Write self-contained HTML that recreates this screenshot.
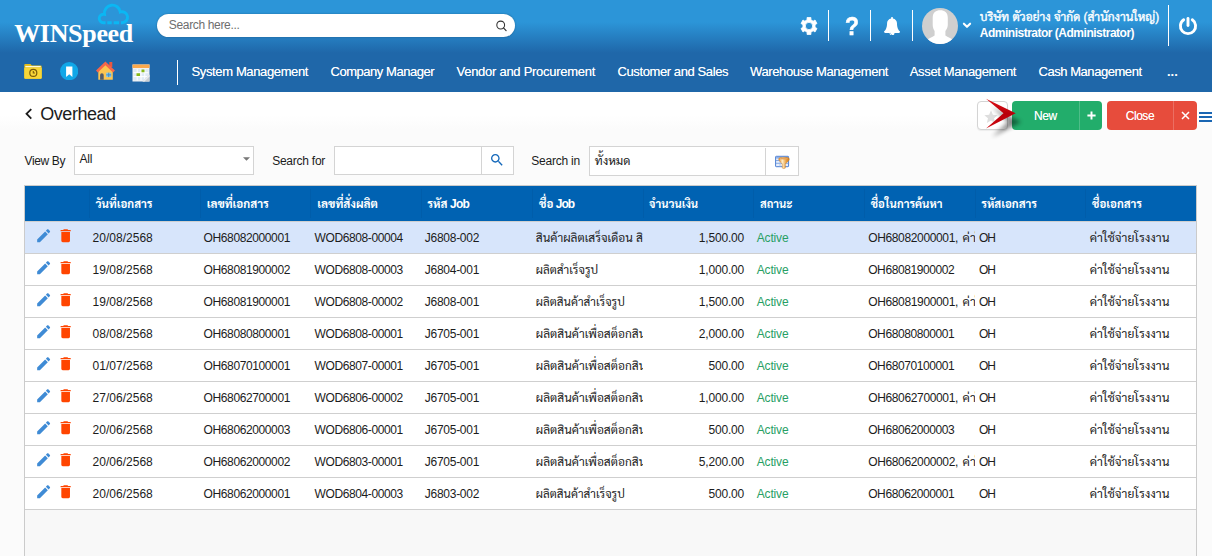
<!DOCTYPE html>
<html lang="th">
<head>
<meta charset="utf-8">
<title>Overhead</title>
<style>
*{box-sizing:border-box;margin:0;padding:0}
html,body{width:1212px;height:556px;overflow:hidden;background:#fbfbfb}
body{font-family:"Liberation Sans","Sarabun","Noto Sans Thai Looped","Loma",sans-serif;font-size:12px;color:#1c1c1c;position:relative}
.abs{position:absolute}
.t{position:absolute;white-space:nowrap;line-height:20px;height:20px}
.t .i{display:inline-block;white-space:nowrap}
#hdr{position:absolute;left:0;top:0;width:1212px;height:92px;background:linear-gradient(to bottom,#2c95d8 0px,#2c95d8 22px,#1f67a9 53px,#1f67a9 92px)}
#logo{position:absolute;left:14.2px;top:18.75px;letter-spacing:-.32px;font-family:"Liberation Serif",serif;font-weight:bold;font-size:26px;color:#fff;line-height:30px;white-space:nowrap}
#srch{position:absolute;left:157px;top:14px;width:358px;height:23px;border-radius:12px;background:#fff;box-shadow:0 0 2px rgba(0,0,0,.3)}
.vd{position:absolute;width:1px;background:#fff}
#main{position:absolute;left:0;top:92px;width:1212px;height:464px;background:linear-gradient(to bottom,#fff 0px,#fff 23px,#fbfbfb 37px)}
.btn{position:absolute;top:101px;height:29px;border-radius:4px}
.btn i{position:absolute;top:0;width:1px;height:29px;background:rgba(255,255,255,.2)}
.inp{position:absolute;top:146px;height:29px;background:#fff;border:1px solid #d4d4d4}
.inp i{position:absolute;top:0;width:1px;height:27px;background:#d4d4d4}
#tbl{position:absolute;left:24px;top:185px;width:1173px;height:380px;border:1px solid #cbcbcb;background:#f8f8f8}
#th{position:absolute;left:25px;top:186px;width:1171px;height:35px;background:#0062b2}
#th i{position:absolute;top:3px;width:1px;height:29px;background:rgba(0,0,40,.05)}
.row{position:absolute;left:25px;width:1171px;height:32px;background:#fff;border-top:1px solid #cfcfcf}
.row.sel{background:#d7e5fb}
.k{letter-spacing:0}

</style>
</head>
<body>
<div id="hdr">
<svg class="abs" style="left:95px;top:1px" width="37" height="26" viewBox="0 0 37 26"><path d="M10.60 21.70 L8.50 21.70 A4.25 4.25 0 1 1 9.49 13.32 A8.00 8.00 0 1 1 25.32 10.99 A5.50 5.50 0 1 1 27.10 21.70 L26.00 21.70 M12.30 21.70 L16.70 21.70 M18.70 21.70 L24.00 21.70" fill="none" stroke="#0bb7f3" stroke-width="2.9"/></svg>
<div id="logo">WINSpeed</div>
<div id="srch"><svg class="abs" style="left:338px;top:5.5px" width="13" height="13" viewBox="0 0 13 13"><circle cx="5.700" cy="5" r="3.900" fill="none" stroke="#333" stroke-width="1.050"/><path d="M8.500 7.900l2.600 2.700" stroke="#333" stroke-width="1.200" stroke-linecap="round"/></svg></div>
<span class="t" style="top:15.04px;font-size:12px;color:#6e6e6e;letter-spacing:-0.341px;left:168.80px;"><span class="i">Search here...</span></span>
<svg class="abs" style="left:798.95px;top:15.9px" width="20" height="20" viewBox="0 0 20 20"><path d="M11.92 3.82 L11.94 1.54 L8.06 1.54 L8.08 3.82 L5.85 5.17 L3.97 4.01 L2.03 7.53 L3.93 8.65 L3.93 11.35 L2.03 12.47 L3.97 15.99 L5.85 14.83 L8.08 16.18 L8.06 18.46 L11.94 18.46 L11.92 16.18 L14.15 14.83 L16.03 15.99 L17.97 12.47 L16.07 11.35 L16.07 8.65 L17.97 7.53 L16.03 4.01 L14.15 5.17Z M6.30 10.00 a3.7 3.7 0 1 0 7.4 0 a3.7 3.7 0 1 0 -7.4 0Z" fill="#fff" fill-rule="evenodd" stroke="#fff" stroke-width=".8" stroke-linejoin="round"/></svg>
<div class="vd" style="left:828px;top:10px;height:31px"></div>
<span class="t" style="top:16.26px;font-size:25.5px;color:#fff;font-weight:bold;left:845.20px;transform:scaleX(.9);transform-origin:0 0;-webkit-text-stroke:.5px #fff;"><span class="i"><span class="k" style="font-size:25.50px">?</span></span></span>
<div class="vd" style="left:870px;top:10px;height:31px"></div>
<svg class="abs" style="left:884.00px;top:16.50px" width="16.06" height="18.60" preserveAspectRatio="none" viewBox="64 -1536 1664 1792"><path transform="scale(1,-1)" fill="#fff" d="M912 -160C912 -169 905 -176 896 -176C799 -176 720 -97 720 0C720 9 727 16 736 16C745 16 752 9 752 0C752 -79 817 -144 896 -144C905 -144 912 -151 912 -160ZM1728 128C1580 253 1408 477 1408 960C1408 1152 1249 1362 984 1401C989 1413 992 1426 992 1440C992 1493 949 1536 896 1536C843 1536 800 1493 800 1440C800 1426 803 1413 808 1401C543 1362 384 1152 384 960C384 477 212 253 64 128C64 58 122 0 192 0H640C640 -141 755 -256 896 -256C1037 -256 1152 -141 1152 0H1600C1670 0 1728 58 1728 128Z"/></svg>
<div class="vd" style="left:912px;top:10px;height:31px"></div>
<svg class="abs" style="left:921px;top:7px" width="38" height="38" viewBox="-19 -19 38 38"><defs><clipPath id="av"><circle cx="0" cy="0" r="18"/></clipPath></defs><circle cx="0" cy="0" r="18" fill="#cfcfcf"/><g clip-path="url(#av)"><path fill="#fff" d="M-7.300 -8C-7.300 -14 -4 -15.800 0.200 -15.800C4.500 -15.800 7.800 -14 7.800 -8V-1C7.800 2 6 4 5.400 5V9.500C8 11.500 11 12.300 13 14L15 20H-15L-13 14C-11 12.300 -8 11.500 -5.400 9.500V5C-6 4 -7.300 2 -7.300 -1Z"/></g></svg>
<svg class="abs" style="left:962px;top:21px" width="10" height="8" viewBox="0 0 10 8"><path d="M1.900 2.700L5 5.800L8.100 2.700" fill="none" stroke="#fff" stroke-width="2.100" stroke-linecap="round" stroke-linejoin="round"/></svg>
<span class="t" style="top:7.14px;font-size:12px;color:#fff;left:979.80px;-webkit-text-stroke:.35px #fff;"><span class="i"><span class="k" style="font-size:11.90px">บริษัท ตัวอย่าง จำกัด (สำนักงานใหญ่)</span></span></span>
<span class="t" style="top:23.24px;font-size:12px;color:#fff;font-weight:bold;letter-spacing:-0.496px;left:979.80px;"><span class="i">Administrator (Administrator)</span></span>
<div class="vd" style="left:1168px;top:5px;height:41px"></div>
<svg class="abs" style="left:1178.1px;top:15.8px" width="20" height="20" viewBox="0 0 20 20"><path d="M5.700 3.800A7.600 7.600 0 1 0 14.300 3.800" fill="none" stroke="#fff" stroke-width="2.900" stroke-linecap="round"/><path d="M10 2.500v7" stroke="#fff" stroke-width="2.900" stroke-linecap="round"/></svg>
<svg class="abs" style="left:24px;top:63px" width="18" height="17" viewBox="0 0 18 17"><path d="M0.300 2a1 1 0 0 1 1-1.100h5.200l1.300 1.500h8.900a1 1 0 0 1 1 1v11.400a1 1 0 0 1-1 1h-15.400a1 1 0 0 1-1-1z" fill="#e2bd1c"/><path d="M0.300 4.700h17.400v10a1 1 0 0 1-1 1h-15.400a1 1 0 0 1-1-1z" fill="#f8d737"/><path d="M1.300 3.600h15.400" stroke="#fff8d8" stroke-width="1.300"/><circle cx="9.300" cy="9.900" r="3.500" fill="none" stroke="#7a5c0a" stroke-width="1.200"/><path d="M9.300 8v2h1.600" fill="none" stroke="#7a5c0a" stroke-width="1.100"/></svg>
<svg class="abs" style="left:59.8px;top:62px" width="18.4" height="18.4" viewBox="0 0 18.4 18.4"><circle cx="9.200" cy="9.200" r="9.100" fill="#10a7e8"/><path d="M6.100 4.500h6.300v10.500l-3.150-2.700-3.150 2.700z" fill="#fff"/></svg>
<svg class="abs" style="left:95.5px;top:61.2px" width="19" height="19" viewBox="0 0 19 19"><path d="M13.300 1h3v5h-3z" fill="#e9573f"/><path d="M2.300 8.500l7.100-6 7.400 6v10.200h-14.500z" fill="#fcc550"/><path d="M9.400 0.400L18.900 9.500l-1.900 2-7.600-7.300-7.600 7.300-1.900-2z" fill="#f4664a"/><path d="M4.100 14a1.800 1.800 0 0 1 3.600 0v4.700h-3.600z" fill="#525b6b"/><path d="M10.200 11.700h5v4.400h-5z" fill="#7cc7f2"/><path d="M12.700 11.700v4.400M10.200 13.900h5" stroke="#3f82b5" stroke-width=".8"/></svg>
<svg class="abs" style="left:132px;top:63.5px" width="18" height="18" viewBox="0 0 18 18"><path d="M0.500 0.500h17v17h-17z" fill="#f2f2f2"/><path d="M0.500 0.500h17v3.500h-17z" fill="#fba94c"/><path d="M1.500 5h15v11.500h-15z" fill="#dfeaf5"/><path d="M1.500 8.700h15M1.500 12.600h15M5.200 5v11.500M9 5v11.500M12.800 5v11.500" stroke="#fff" stroke-width="1"/><path d="M9.500 5.500h3v2.700h-3zM4.500 9.300h3.500v2.800h-3.500z" fill="#86b817"/><path d="M10.500 17.500l7-7v7z" fill="#c9cdd2"/><path d="M10.500 17.500l3.500-3.500 3.500-3.500v2l-5 5z" fill="#e9ecef"/></svg>
<div class="vd" style="left:177px;top:60px;height:25px"></div>
<span class="t" style="top:61.70px;font-size:13px;color:#fff;letter-spacing:-0.367px;left:191.50px;text-shadow:0 0 .5px rgba(255,255,255,.7);"><span class="i">System Management</span></span>
<span class="t" style="top:61.70px;font-size:13px;color:#fff;letter-spacing:-0.464px;left:330.50px;text-shadow:0 0 .5px rgba(255,255,255,.7);"><span class="i">Company Manager</span></span>
<span class="t" style="top:61.70px;font-size:13px;color:#fff;letter-spacing:-0.270px;left:456.50px;text-shadow:0 0 .5px rgba(255,255,255,.7);"><span class="i">Vendor and Procurement</span></span>
<span class="t" style="top:61.70px;font-size:13px;color:#fff;letter-spacing:-0.400px;left:617.50px;text-shadow:0 0 .5px rgba(255,255,255,.7);"><span class="i">Customer and Sales</span></span>
<span class="t" style="top:61.70px;font-size:13px;color:#fff;letter-spacing:-0.369px;left:750.00px;text-shadow:0 0 .5px rgba(255,255,255,.7);"><span class="i">Warehouse Management</span></span>
<span class="t" style="top:61.70px;font-size:13px;color:#fff;letter-spacing:-0.357px;left:909.80px;text-shadow:0 0 .5px rgba(255,255,255,.7);"><span class="i">Asset Management</span></span>
<span class="t" style="top:61.70px;font-size:13px;color:#fff;letter-spacing:-0.450px;left:1038.50px;text-shadow:0 0 .5px rgba(255,255,255,.7);"><span class="i">Cash Management</span></span>
<span class="t" style="top:61.70px;font-size:13px;color:#fff;font-weight:bold;left:1167.00px;letter-spacing:-.2px;"><span class="i"><span class="k" style="font-size:13.00px">...</span></span></span>
</div>
<div id="main"></div>
<svg class="abs" style="left:18.45px;top:103.05px;" width="21.7" height="21.7" viewBox="0 0 24 24"><path fill="#1c1c1c" d="M15.41 16.59L10.83 12l4.58-4.59L14 6l-6 6 6 6 1.41-1.41z"/></svg>
<span class="t" style="top:103.76px;font-size:18px;color:#1c1c1c;letter-spacing:-0.470px;left:40.30px;"><span class="i">Overhead</span></span>
<div class="abs" style="left:977px;top:101px;width:31px;height:29px;border:1px solid #d4d4d4;border-radius:4px;background:#fff;box-shadow:0 1px 1px rgba(0,0,0,.06)"></div>
<svg class="abs" style="left:983.10px;top:108.70px;" width="16" height="16" viewBox="0 0 24 24"><path fill="#dedede" d="M12 17.27L18.18 21l-1.64-7.03L22 9.24l-7.19-.61L12 2 9.19 8.63 2 9.24l5.46 4.73L5.82 21z"/></svg>
<div class="btn" style="left:1012px;width:90px;background:#22ad6b"><i style="left:67px"></i></div>
<span class="t" style="top:105.84px;font-size:12px;color:#fff;letter-spacing:-0.473px;left:1034.10px;text-shadow:0 0 .5px rgba(255,255,255,.7);"><span class="i">New</span></span>
<svg class="abs" style="left:1086.8px;top:111.4px" width="9" height="9" viewBox="0 0 9 9"><path d="M4.500 0.400v8.200M0.400 4.500h8.200" stroke="#fff" stroke-width="1.950"/></svg>
<div class="btn" style="left:1107px;width:90px;background:#e74c3c"><i style="left:66px"></i></div>
<span class="t" style="top:105.84px;font-size:12px;color:#fff;letter-spacing:-0.476px;left:1125.80px;text-shadow:0 0 .5px rgba(255,255,255,.7);"><span class="i">Close</span></span>
<svg class="abs" style="left:1180.7px;top:111.4px" width="9" height="9" viewBox="0 0 9 9"><path d="M1 1l7 7M8 1l-7 7" stroke="#fff" stroke-width="1.500"/></svg>
<svg class="abs" style="left:976px;top:94px;overflow:visible" width="50" height="46" viewBox="0 0 50 46"><defs><filter id="sh" x="-40%" y="-40%" width="200%" height="200%"><feGaussianBlur stdDeviation="2.200"/></filter><linearGradient id="rg" x1="0" y1="0" x2="0" y2="1"><stop offset="0" stop-color="#e01018"/><stop offset=".5" stop-color="#b8000a"/><stop offset="1" stop-color="#d00810"/></linearGradient></defs><path d="M14 10l29 15-29 15 16-15z" fill="#000" opacity=".45" filter="url(#sh)" transform="translate(2,3)"/><path d="M10 4.700l29.700 14.500-29.700 15.300 17.500-15.300z" fill="url(#rg)"/></svg>
<div class="abs" style="left:1199px;top:111.500px;width:13px;height:2px;background:#1a66b3"></div>
<div class="abs" style="left:1199px;top:115.500px;width:13px;height:2px;background:#1a66b3"></div>
<div class="abs" style="left:1199px;top:119.500px;width:13px;height:2px;background:#1a66b3"></div>
<span class="t" style="top:150.84px;font-size:12px;color:#1c1c1c;letter-spacing:-0.363px;left:24.50px;"><span class="i">View By</span></span>
<div class="inp" style="left:74px;width:180px"></div>
<span class="t" style="top:148.84px;font-size:12px;color:#1c1c1c;letter-spacing:-0.249px;left:79.50px;"><span class="i">All</span></span>
<svg class="abs" style="left:242.5px;top:157px" width="7" height="3.8" viewBox="0 0 8 4"><path d="M0 0h8L4 4z" fill="#777"/></svg>
<span class="t" style="top:150.84px;font-size:12px;color:#1c1c1c;letter-spacing:-0.246px;left:272.20px;"><span class="i">Search for</span></span>
<div class="inp" style="left:334px;width:180px"><i style="left:146px"></i></div>
<svg class="abs" style="left:489.20px;top:151.70px;" width="16" height="16" viewBox="0 0 24 24"><path fill="#1468ba" d="M15.5 14h-.79l-.28-.27C15.41 12.59 16 11.11 16 9.5 16 5.91 13.09 3 9.5 3S3 5.91 3 9.5 5.91 16 9.5 16c1.61 0 3.09-.59 4.23-1.57l.27.28v.79l5 4.99L20.49 19l-4.99-5zm-6 0C7.01 14 5 11.99 5 9.5S7.01 5 9.5 5 14 7.01 14 9.5 11.99 14 9.5 14z"/></svg>
<span class="t" style="top:150.84px;font-size:12px;color:#1c1c1c;letter-spacing:-0.234px;left:531.30px;"><span class="i">Search in</span></span>
<div class="inp" style="left:589px;width:210px;height:30px"><i style="left:175px;top:1px;height:27px"></i></div>
<span class="t" style="top:150.84px;font-size:12px;color:#1c1c1c;left:594.70px;"><span class="i"><span class="k" style="font-size:12.13px">ทั้งหมด</span></span></span>
<svg class="abs" style="left:774px;top:155px" width="17" height="15" viewBox="774 155 17 15"><defs><linearGradient id="fg" x1="0" y1="0" x2="1" y2="0"><stop offset="0" stop-color="#e39232"/><stop offset=".35" stop-color="#fdebc6"/><stop offset=".7" stop-color="#eaa040"/><stop offset="1" stop-color="#cf7c20"/></linearGradient></defs><rect x="775.600" y="156.300" width="13" height="10.400" rx=".6" fill="#e6eefb" stroke="#4d7fd2" stroke-width="1"/><path d="M776 157.800h12.200" stroke="#8fb0e8" stroke-width="1.600"/><path d="M776 160.500h12.200M776 163.300h12.200" stroke="#7ea2e0" stroke-width=".9"/><path d="M780 157v9.500" stroke="#9db9ea" stroke-width=".8"/><path d="M778.700 158.700Q779 157.300 784 157.300Q789 157.300 789.300 158.700C789.200 161.500 786.200 162.400 785.300 164V168.100Q783.800 169 782.300 168.100V164C781.400 162.400 778.800 161.500 778.700 158.700Z" fill="url(#fg)" stroke="#c9781f" stroke-width=".5"/><ellipse cx="784" cy="158.600" rx="3.800" ry=".9" fill="#e6a25a"/></svg>
<div class="abs" style="left:1197px;top:180px;width:15px;height:376px;background:#fbfbfb"></div>
<div id="tbl"></div>
<div id="th"><i style="left:64.0px"></i><i style="left:174.7px"></i><i style="left:285.4px"></i><i style="left:396.1px"></i><i style="left:506.8px"></i><i style="left:617.5px"></i><i style="left:728.2px"></i><i style="left:838.9px"></i><i style="left:949.6px"></i><i style="left:1060.3px"></i></div>
<span class="t" style="top:193.84px;font-size:12px;color:#fff;font-weight:bold;left:95.50px;"><span class="i"><span class="k" style="font-size:11.42px">วันที่เอกสาร</span></span></span>
<span class="t" style="top:193.84px;font-size:12px;color:#fff;font-weight:bold;left:206.70px;"><span class="i"><span class="k" style="font-size:11.58px">เลขที่เอกสาร</span></span></span>
<span class="t" style="top:193.84px;font-size:12px;color:#fff;font-weight:bold;left:317.30px;"><span class="i"><span class="k" style="font-size:11.66px">เลขที่สั่งผลิต</span></span></span>
<span class="t" style="top:193.84px;font-size:12px;color:#fff;font-weight:bold;letter-spacing:-0.740px;left:427.30px;"><span class="i"><span class="k" style="font-size:11.52px">รหัส</span> Job</span></span>
<span class="t" style="top:193.84px;font-size:12px;color:#fff;font-weight:bold;letter-spacing:-0.995px;left:539.00px;"><span class="i"><span class="k" style="font-size:11.52px">ชื่อ</span> Job</span></span>
<span class="t" style="top:193.84px;font-size:12px;color:#fff;font-weight:bold;left:649.00px;"><span class="i"><span class="k" style="font-size:11.24px">จำนวนเงิน</span></span></span>
<span class="t" style="top:193.84px;font-size:12px;color:#fff;font-weight:bold;left:760.00px;"><span class="i"><span class="k" style="font-size:11.15px">สถานะ</span></span></span>
<span class="t" style="top:193.84px;font-size:12px;color:#fff;font-weight:bold;left:870.70px;"><span class="i"><span class="k" style="font-size:11.29px">ชื่อในการค้นหา</span></span></span>
<span class="t" style="top:193.84px;font-size:12px;color:#fff;font-weight:bold;left:981.30px;"><span class="i"><span class="k" style="font-size:11.45px">รหัสเอกสาร</span></span></span>
<span class="t" style="top:193.84px;font-size:12px;color:#fff;font-weight:bold;left:1092.00px;"><span class="i"><span class="k" style="font-size:11.43px">ชื่อเอกสาร</span></span></span>
<div class="row sel" style="top:221px"></div>
<svg class="abs" style="left:35.05px;top:226.60px;" width="17.3" height="17.3" viewBox="0 0 24 24"><path fill="#3f8bd5" d="M3 17.25V21h3.75L17.81 9.94l-3.75-3.75L3 17.25zM20.71 7.04c.39-.39.39-1.02 0-1.41l-2.34-2.34c-.39-.39-1.02-.39-1.41 0l-1.83 1.83 3.75 3.75 1.83-1.83z"/></svg>
<svg class="abs" style="left:56.55px;top:226.75px;" width="17.3" height="17.3" viewBox="0 0 24 24"><path fill="#ff4500" d="M6 19c0 1.1.9 2 2 2h8c1.1 0 2-.9 2-2V7H6v12zM19 4h-3.5l-1-1h-5l-1 1H5v2h14V4z"/></svg>
<span class="t" style="top:227.84px;font-size:12px;color:#1c1c1c;letter-spacing:0.013px;left:92.60px;"><span class="i">20/08/2568</span></span>
<span class="t" style="top:227.84px;font-size:12px;color:#1c1c1c;letter-spacing:-0.386px;left:203.60px;"><span class="i">OH68082000001</span></span>
<span class="t" style="top:227.84px;font-size:12px;color:#1c1c1c;letter-spacing:-0.392px;left:314.50px;"><span class="i">WOD6808-00004</span></span>
<span class="t" style="top:227.84px;font-size:12px;color:#1c1c1c;letter-spacing:-0.270px;left:424.80px;"><span class="i">J6808-002</span></span>
<span class="t" style="top:227.84px;font-size:12px;color:#1c1c1c;left:535.80px;width:106.80px;overflow:hidden;"><span class="i"><span class="k" style="font-size:11.88px">สินค้าผลิตเสร็จเดือน สิงหาคม</span></span></span>
<span class="t" style="top:227.84px;font-size:12px;color:#1c1c1c;letter-spacing:-0.177px;left:698.80px;"><span class="i">1,500.00</span></span>
<span class="t" style="top:227.84px;font-size:12px;color:#27a064;letter-spacing:-0.182px;left:756.80px;"><span class="i">Active</span></span>
<span class="t" style="top:227.84px;font-size:12px;color:#1c1c1c;left:868.20px;width:106.80px;overflow:hidden;letter-spacing:-0.356px;"><span class="i">OH68082000001<span style="letter-spacing:.45px">, </span><span class="k" style="font-size:12.2px">ค่าใช้จ่ายโรงงาน</span></span></span>
<span class="t" style="top:227.84px;font-size:12px;color:#1c1c1c;letter-spacing:-1.153px;left:979.10px;"><span class="i">OH</span></span>
<span class="t" style="top:227.84px;font-size:12px;color:#1c1c1c;left:1089.70px;"><span class="i"><span class="k" style="font-size:12.13px">ค่าใช้จ่ายโรงงาน</span></span></span>
<div class="row" style="top:253px"></div>
<svg class="abs" style="left:35.05px;top:258.60px;" width="17.3" height="17.3" viewBox="0 0 24 24"><path fill="#3f8bd5" d="M3 17.25V21h3.75L17.81 9.94l-3.75-3.75L3 17.25zM20.71 7.04c.39-.39.39-1.02 0-1.41l-2.34-2.34c-.39-.39-1.02-.39-1.41 0l-1.83 1.83 3.75 3.75 1.83-1.83z"/></svg>
<svg class="abs" style="left:56.55px;top:258.75px;" width="17.3" height="17.3" viewBox="0 0 24 24"><path fill="#ff4500" d="M6 19c0 1.1.9 2 2 2h8c1.1 0 2-.9 2-2V7H6v12zM19 4h-3.5l-1-1h-5l-1 1H5v2h14V4z"/></svg>
<span class="t" style="top:259.84px;font-size:12px;color:#1c1c1c;letter-spacing:0.013px;left:92.60px;"><span class="i">19/08/2568</span></span>
<span class="t" style="top:259.84px;font-size:12px;color:#1c1c1c;letter-spacing:-0.386px;left:203.60px;"><span class="i">OH68081900002</span></span>
<span class="t" style="top:259.84px;font-size:12px;color:#1c1c1c;letter-spacing:-0.392px;left:314.50px;"><span class="i">WOD6808-00003</span></span>
<span class="t" style="top:259.84px;font-size:12px;color:#1c1c1c;letter-spacing:-0.270px;left:424.80px;"><span class="i">J6804-001</span></span>
<span class="t" style="top:259.84px;font-size:12px;color:#1c1c1c;left:535.80px;"><span class="i"><span class="k" style="font-size:11.63px">ผลิตสำเร็จรูป</span></span></span>
<span class="t" style="top:259.84px;font-size:12px;color:#1c1c1c;letter-spacing:-0.177px;left:698.80px;"><span class="i">1,000.00</span></span>
<span class="t" style="top:259.84px;font-size:12px;color:#27a064;letter-spacing:-0.182px;left:756.80px;"><span class="i">Active</span></span>
<span class="t" style="top:259.84px;font-size:12px;color:#1c1c1c;letter-spacing:-0.401px;left:868.20px;"><span class="i">OH68081900002</span></span>
<span class="t" style="top:259.84px;font-size:12px;color:#1c1c1c;letter-spacing:-1.153px;left:979.10px;"><span class="i">OH</span></span>
<span class="t" style="top:259.84px;font-size:12px;color:#1c1c1c;left:1089.70px;"><span class="i"><span class="k" style="font-size:12.13px">ค่าใช้จ่ายโรงงาน</span></span></span>
<div class="row" style="top:285px"></div>
<svg class="abs" style="left:35.05px;top:290.60px;" width="17.3" height="17.3" viewBox="0 0 24 24"><path fill="#3f8bd5" d="M3 17.25V21h3.75L17.81 9.94l-3.75-3.75L3 17.25zM20.71 7.04c.39-.39.39-1.02 0-1.41l-2.34-2.34c-.39-.39-1.02-.39-1.41 0l-1.83 1.83 3.75 3.75 1.83-1.83z"/></svg>
<svg class="abs" style="left:56.55px;top:290.75px;" width="17.3" height="17.3" viewBox="0 0 24 24"><path fill="#ff4500" d="M6 19c0 1.1.9 2 2 2h8c1.1 0 2-.9 2-2V7H6v12zM19 4h-3.5l-1-1h-5l-1 1H5v2h14V4z"/></svg>
<span class="t" style="top:291.84px;font-size:12px;color:#1c1c1c;letter-spacing:0.013px;left:92.60px;"><span class="i">19/08/2568</span></span>
<span class="t" style="top:291.84px;font-size:12px;color:#1c1c1c;letter-spacing:-0.386px;left:203.60px;"><span class="i">OH68081900001</span></span>
<span class="t" style="top:291.84px;font-size:12px;color:#1c1c1c;letter-spacing:-0.392px;left:314.50px;"><span class="i">WOD6808-00002</span></span>
<span class="t" style="top:291.84px;font-size:12px;color:#1c1c1c;letter-spacing:-0.270px;left:424.80px;"><span class="i">J6808-001</span></span>
<span class="t" style="top:291.84px;font-size:12px;color:#1c1c1c;left:535.80px;"><span class="i"><span class="k" style="font-size:11.61px">ผลิตสินค้าสำเร็จรูป</span></span></span>
<span class="t" style="top:291.84px;font-size:12px;color:#1c1c1c;letter-spacing:-0.177px;left:698.80px;"><span class="i">1,500.00</span></span>
<span class="t" style="top:291.84px;font-size:12px;color:#27a064;letter-spacing:-0.182px;left:756.80px;"><span class="i">Active</span></span>
<span class="t" style="top:291.84px;font-size:12px;color:#1c1c1c;left:868.20px;width:106.80px;overflow:hidden;letter-spacing:-0.356px;"><span class="i">OH68081900001<span style="letter-spacing:.45px">, </span><span class="k" style="font-size:12.2px">ค่าใช้จ่ายโรงงาน</span></span></span>
<span class="t" style="top:291.84px;font-size:12px;color:#1c1c1c;letter-spacing:-1.153px;left:979.10px;"><span class="i">OH</span></span>
<span class="t" style="top:291.84px;font-size:12px;color:#1c1c1c;left:1089.70px;"><span class="i"><span class="k" style="font-size:12.13px">ค่าใช้จ่ายโรงงาน</span></span></span>
<div class="row" style="top:317px"></div>
<svg class="abs" style="left:35.05px;top:322.60px;" width="17.3" height="17.3" viewBox="0 0 24 24"><path fill="#3f8bd5" d="M3 17.25V21h3.75L17.81 9.94l-3.75-3.75L3 17.25zM20.71 7.04c.39-.39.39-1.02 0-1.41l-2.34-2.34c-.39-.39-1.02-.39-1.41 0l-1.83 1.83 3.75 3.75 1.83-1.83z"/></svg>
<svg class="abs" style="left:56.55px;top:322.75px;" width="17.3" height="17.3" viewBox="0 0 24 24"><path fill="#ff4500" d="M6 19c0 1.1.9 2 2 2h8c1.1 0 2-.9 2-2V7H6v12zM19 4h-3.5l-1-1h-5l-1 1H5v2h14V4z"/></svg>
<span class="t" style="top:323.84px;font-size:12px;color:#1c1c1c;letter-spacing:0.013px;left:92.60px;"><span class="i">08/08/2568</span></span>
<span class="t" style="top:323.84px;font-size:12px;color:#1c1c1c;letter-spacing:-0.386px;left:203.60px;"><span class="i">OH68080800001</span></span>
<span class="t" style="top:323.84px;font-size:12px;color:#1c1c1c;letter-spacing:-0.392px;left:314.50px;"><span class="i">WOD6808-00001</span></span>
<span class="t" style="top:323.84px;font-size:12px;color:#1c1c1c;letter-spacing:-0.270px;left:424.80px;"><span class="i">J6705-001</span></span>
<span class="t" style="top:323.84px;font-size:12px;color:#1c1c1c;left:535.80px;width:106.80px;overflow:hidden;"><span class="i"><span class="k" style="font-size:11.88px">ผลิตสินค้าเพื่อสต็อกสินค้า</span></span></span>
<span class="t" style="top:323.84px;font-size:12px;color:#1c1c1c;letter-spacing:-0.177px;left:698.80px;"><span class="i">2,000.00</span></span>
<span class="t" style="top:323.84px;font-size:12px;color:#27a064;letter-spacing:-0.182px;left:756.80px;"><span class="i">Active</span></span>
<span class="t" style="top:323.84px;font-size:12px;color:#1c1c1c;letter-spacing:-0.401px;left:868.20px;"><span class="i">OH68080800001</span></span>
<span class="t" style="top:323.84px;font-size:12px;color:#1c1c1c;letter-spacing:-1.153px;left:979.10px;"><span class="i">OH</span></span>
<span class="t" style="top:323.84px;font-size:12px;color:#1c1c1c;left:1089.70px;"><span class="i"><span class="k" style="font-size:12.13px">ค่าใช้จ่ายโรงงาน</span></span></span>
<div class="row" style="top:349px"></div>
<svg class="abs" style="left:35.05px;top:354.60px;" width="17.3" height="17.3" viewBox="0 0 24 24"><path fill="#3f8bd5" d="M3 17.25V21h3.75L17.81 9.94l-3.75-3.75L3 17.25zM20.71 7.04c.39-.39.39-1.02 0-1.41l-2.34-2.34c-.39-.39-1.02-.39-1.41 0l-1.83 1.83 3.75 3.75 1.83-1.83z"/></svg>
<svg class="abs" style="left:56.55px;top:354.75px;" width="17.3" height="17.3" viewBox="0 0 24 24"><path fill="#ff4500" d="M6 19c0 1.1.9 2 2 2h8c1.1 0 2-.9 2-2V7H6v12zM19 4h-3.5l-1-1h-5l-1 1H5v2h14V4z"/></svg>
<span class="t" style="top:355.84px;font-size:12px;color:#1c1c1c;letter-spacing:0.013px;left:92.60px;"><span class="i">01/07/2568</span></span>
<span class="t" style="top:355.84px;font-size:12px;color:#1c1c1c;letter-spacing:-0.386px;left:203.60px;"><span class="i">OH68070100001</span></span>
<span class="t" style="top:355.84px;font-size:12px;color:#1c1c1c;letter-spacing:-0.392px;left:314.50px;"><span class="i">WOD6807-00001</span></span>
<span class="t" style="top:355.84px;font-size:12px;color:#1c1c1c;letter-spacing:-0.270px;left:424.80px;"><span class="i">J6705-001</span></span>
<span class="t" style="top:355.84px;font-size:12px;color:#1c1c1c;left:535.80px;width:106.80px;overflow:hidden;"><span class="i"><span class="k" style="font-size:11.88px">ผลิตสินค้าเพื่อสต็อกสินค้า</span></span></span>
<span class="t" style="top:355.84px;font-size:12px;color:#1c1c1c;letter-spacing:-0.168px;left:708.40px;"><span class="i">500.00</span></span>
<span class="t" style="top:355.84px;font-size:12px;color:#27a064;letter-spacing:-0.182px;left:756.80px;"><span class="i">Active</span></span>
<span class="t" style="top:355.84px;font-size:12px;color:#1c1c1c;letter-spacing:-0.401px;left:868.20px;"><span class="i">OH68070100001</span></span>
<span class="t" style="top:355.84px;font-size:12px;color:#1c1c1c;letter-spacing:-1.153px;left:979.10px;"><span class="i">OH</span></span>
<span class="t" style="top:355.84px;font-size:12px;color:#1c1c1c;left:1089.70px;"><span class="i"><span class="k" style="font-size:12.13px">ค่าใช้จ่ายโรงงาน</span></span></span>
<div class="row" style="top:381px"></div>
<svg class="abs" style="left:35.05px;top:386.60px;" width="17.3" height="17.3" viewBox="0 0 24 24"><path fill="#3f8bd5" d="M3 17.25V21h3.75L17.81 9.94l-3.75-3.75L3 17.25zM20.71 7.04c.39-.39.39-1.02 0-1.41l-2.34-2.34c-.39-.39-1.02-.39-1.41 0l-1.83 1.83 3.75 3.75 1.83-1.83z"/></svg>
<svg class="abs" style="left:56.55px;top:386.75px;" width="17.3" height="17.3" viewBox="0 0 24 24"><path fill="#ff4500" d="M6 19c0 1.1.9 2 2 2h8c1.1 0 2-.9 2-2V7H6v12zM19 4h-3.5l-1-1h-5l-1 1H5v2h14V4z"/></svg>
<span class="t" style="top:387.84px;font-size:12px;color:#1c1c1c;letter-spacing:0.013px;left:92.60px;"><span class="i">27/06/2568</span></span>
<span class="t" style="top:387.84px;font-size:12px;color:#1c1c1c;letter-spacing:-0.386px;left:203.60px;"><span class="i">OH68062700001</span></span>
<span class="t" style="top:387.84px;font-size:12px;color:#1c1c1c;letter-spacing:-0.392px;left:314.50px;"><span class="i">WOD6806-00002</span></span>
<span class="t" style="top:387.84px;font-size:12px;color:#1c1c1c;letter-spacing:-0.270px;left:424.80px;"><span class="i">J6705-001</span></span>
<span class="t" style="top:387.84px;font-size:12px;color:#1c1c1c;left:535.80px;width:106.80px;overflow:hidden;"><span class="i"><span class="k" style="font-size:11.88px">ผลิตสินค้าเพื่อสต็อกสินค้า</span></span></span>
<span class="t" style="top:387.84px;font-size:12px;color:#1c1c1c;letter-spacing:-0.177px;left:698.80px;"><span class="i">1,000.00</span></span>
<span class="t" style="top:387.84px;font-size:12px;color:#27a064;letter-spacing:-0.182px;left:756.80px;"><span class="i">Active</span></span>
<span class="t" style="top:387.84px;font-size:12px;color:#1c1c1c;left:868.20px;width:106.80px;overflow:hidden;letter-spacing:-0.356px;"><span class="i">OH68062700001<span style="letter-spacing:.45px">, </span><span class="k" style="font-size:12.2px">ค่าใช้จ่ายโรงงาน</span></span></span>
<span class="t" style="top:387.84px;font-size:12px;color:#1c1c1c;letter-spacing:-1.153px;left:979.10px;"><span class="i">OH</span></span>
<span class="t" style="top:387.84px;font-size:12px;color:#1c1c1c;left:1089.70px;"><span class="i"><span class="k" style="font-size:12.13px">ค่าใช้จ่ายโรงงาน</span></span></span>
<div class="row" style="top:413px"></div>
<svg class="abs" style="left:35.05px;top:418.60px;" width="17.3" height="17.3" viewBox="0 0 24 24"><path fill="#3f8bd5" d="M3 17.25V21h3.75L17.81 9.94l-3.75-3.75L3 17.25zM20.71 7.04c.39-.39.39-1.02 0-1.41l-2.34-2.34c-.39-.39-1.02-.39-1.41 0l-1.83 1.83 3.75 3.75 1.83-1.83z"/></svg>
<svg class="abs" style="left:56.55px;top:418.75px;" width="17.3" height="17.3" viewBox="0 0 24 24"><path fill="#ff4500" d="M6 19c0 1.1.9 2 2 2h8c1.1 0 2-.9 2-2V7H6v12zM19 4h-3.5l-1-1h-5l-1 1H5v2h14V4z"/></svg>
<span class="t" style="top:419.84px;font-size:12px;color:#1c1c1c;letter-spacing:0.013px;left:92.60px;"><span class="i">20/06/2568</span></span>
<span class="t" style="top:419.84px;font-size:12px;color:#1c1c1c;letter-spacing:-0.386px;left:203.60px;"><span class="i">OH68062000003</span></span>
<span class="t" style="top:419.84px;font-size:12px;color:#1c1c1c;letter-spacing:-0.392px;left:314.50px;"><span class="i">WOD6806-00001</span></span>
<span class="t" style="top:419.84px;font-size:12px;color:#1c1c1c;letter-spacing:-0.270px;left:424.80px;"><span class="i">J6705-001</span></span>
<span class="t" style="top:419.84px;font-size:12px;color:#1c1c1c;left:535.80px;width:106.80px;overflow:hidden;"><span class="i"><span class="k" style="font-size:11.88px">ผลิตสินค้าเพื่อสต็อกสินค้า</span></span></span>
<span class="t" style="top:419.84px;font-size:12px;color:#1c1c1c;letter-spacing:-0.168px;left:708.40px;"><span class="i">500.00</span></span>
<span class="t" style="top:419.84px;font-size:12px;color:#27a064;letter-spacing:-0.182px;left:756.80px;"><span class="i">Active</span></span>
<span class="t" style="top:419.84px;font-size:12px;color:#1c1c1c;letter-spacing:-0.401px;left:868.20px;"><span class="i">OH68062000003</span></span>
<span class="t" style="top:419.84px;font-size:12px;color:#1c1c1c;letter-spacing:-1.153px;left:979.10px;"><span class="i">OH</span></span>
<span class="t" style="top:419.84px;font-size:12px;color:#1c1c1c;left:1089.70px;"><span class="i"><span class="k" style="font-size:12.13px">ค่าใช้จ่ายโรงงาน</span></span></span>
<div class="row" style="top:445px"></div>
<svg class="abs" style="left:35.05px;top:450.60px;" width="17.3" height="17.3" viewBox="0 0 24 24"><path fill="#3f8bd5" d="M3 17.25V21h3.75L17.81 9.94l-3.75-3.75L3 17.25zM20.71 7.04c.39-.39.39-1.02 0-1.41l-2.34-2.34c-.39-.39-1.02-.39-1.41 0l-1.83 1.83 3.75 3.75 1.83-1.83z"/></svg>
<svg class="abs" style="left:56.55px;top:450.75px;" width="17.3" height="17.3" viewBox="0 0 24 24"><path fill="#ff4500" d="M6 19c0 1.1.9 2 2 2h8c1.1 0 2-.9 2-2V7H6v12zM19 4h-3.5l-1-1h-5l-1 1H5v2h14V4z"/></svg>
<span class="t" style="top:451.84px;font-size:12px;color:#1c1c1c;letter-spacing:0.013px;left:92.60px;"><span class="i">20/06/2568</span></span>
<span class="t" style="top:451.84px;font-size:12px;color:#1c1c1c;letter-spacing:-0.386px;left:203.60px;"><span class="i">OH68062000002</span></span>
<span class="t" style="top:451.84px;font-size:12px;color:#1c1c1c;letter-spacing:-0.392px;left:314.50px;"><span class="i">WOD6803-00001</span></span>
<span class="t" style="top:451.84px;font-size:12px;color:#1c1c1c;letter-spacing:-0.270px;left:424.80px;"><span class="i">J6705-001</span></span>
<span class="t" style="top:451.84px;font-size:12px;color:#1c1c1c;left:535.80px;width:106.80px;overflow:hidden;"><span class="i"><span class="k" style="font-size:11.88px">ผลิตสินค้าเพื่อสต็อกสินค้า</span></span></span>
<span class="t" style="top:451.84px;font-size:12px;color:#1c1c1c;letter-spacing:-0.177px;left:698.80px;"><span class="i">5,200.00</span></span>
<span class="t" style="top:451.84px;font-size:12px;color:#27a064;letter-spacing:-0.182px;left:756.80px;"><span class="i">Active</span></span>
<span class="t" style="top:451.84px;font-size:12px;color:#1c1c1c;left:868.20px;width:106.80px;overflow:hidden;letter-spacing:-0.356px;"><span class="i">OH68062000002<span style="letter-spacing:.45px">, </span><span class="k" style="font-size:12.2px">ค่าใช้จ่ายโรงงาน</span></span></span>
<span class="t" style="top:451.84px;font-size:12px;color:#1c1c1c;letter-spacing:-1.153px;left:979.10px;"><span class="i">OH</span></span>
<span class="t" style="top:451.84px;font-size:12px;color:#1c1c1c;left:1089.70px;"><span class="i"><span class="k" style="font-size:12.13px">ค่าใช้จ่ายโรงงาน</span></span></span>
<div class="row" style="top:477px"></div>
<svg class="abs" style="left:35.05px;top:482.60px;" width="17.3" height="17.3" viewBox="0 0 24 24"><path fill="#3f8bd5" d="M3 17.25V21h3.75L17.81 9.94l-3.75-3.75L3 17.25zM20.71 7.04c.39-.39.39-1.02 0-1.41l-2.34-2.34c-.39-.39-1.02-.39-1.41 0l-1.83 1.83 3.75 3.75 1.83-1.83z"/></svg>
<svg class="abs" style="left:56.55px;top:482.75px;" width="17.3" height="17.3" viewBox="0 0 24 24"><path fill="#ff4500" d="M6 19c0 1.1.9 2 2 2h8c1.1 0 2-.9 2-2V7H6v12zM19 4h-3.5l-1-1h-5l-1 1H5v2h14V4z"/></svg>
<span class="t" style="top:483.84px;font-size:12px;color:#1c1c1c;letter-spacing:0.013px;left:92.60px;"><span class="i">20/06/2568</span></span>
<span class="t" style="top:483.84px;font-size:12px;color:#1c1c1c;letter-spacing:-0.386px;left:203.60px;"><span class="i">OH68062000001</span></span>
<span class="t" style="top:483.84px;font-size:12px;color:#1c1c1c;letter-spacing:-0.392px;left:314.50px;"><span class="i">WOD6804-00003</span></span>
<span class="t" style="top:483.84px;font-size:12px;color:#1c1c1c;letter-spacing:-0.270px;left:424.80px;"><span class="i">J6803-002</span></span>
<span class="t" style="top:483.84px;font-size:12px;color:#1c1c1c;left:535.80px;"><span class="i"><span class="k" style="font-size:11.61px">ผลิตสินค้าสำเร็จรูป</span></span></span>
<span class="t" style="top:483.84px;font-size:12px;color:#1c1c1c;letter-spacing:-0.168px;left:708.40px;"><span class="i">500.00</span></span>
<span class="t" style="top:483.84px;font-size:12px;color:#27a064;letter-spacing:-0.182px;left:756.80px;"><span class="i">Active</span></span>
<span class="t" style="top:483.84px;font-size:12px;color:#1c1c1c;letter-spacing:-0.401px;left:868.20px;"><span class="i">OH68062000001</span></span>
<span class="t" style="top:483.84px;font-size:12px;color:#1c1c1c;letter-spacing:-1.153px;left:979.10px;"><span class="i">OH</span></span>
<span class="t" style="top:483.84px;font-size:12px;color:#1c1c1c;left:1089.70px;"><span class="i"><span class="k" style="font-size:12.13px">ค่าใช้จ่ายโรงงาน</span></span></span>
<div class="abs" style="left:25px;top:509px;width:1171px;height:1px;background:#cfcfcf"></div>
</body>
</html>
